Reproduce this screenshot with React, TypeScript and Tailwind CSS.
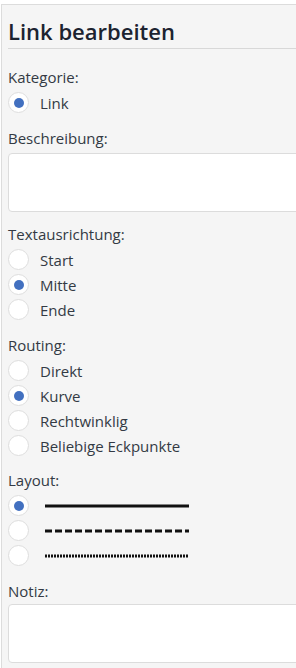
const font = { fontFamily: '"Open Sans", "Noto Sans", sans-serif' };

function Radio({ checked, label }: { checked?: boolean; label?: React.ReactNode }) {
  return (
    <div className="flex items-center h-[25px]">
      <span className="flex items-center justify-center w-[21px] h-[21px] rounded-full bg-white border border-[#dedede] shrink-0">
        {checked && <span className="w-[10px] h-[10px] rounded-full bg-[#4270c0]" />}
      </span>
      <span className="ml-[11px] text-[15px] leading-5 text-[#333a44]">{label}</span>
    </div>
  );
}

function Label({ children }: { children: React.ReactNode }) {
  return <div className="text-[15px] leading-5 text-[#333a44] mb-[3px]">{children}</div>;
}

function LineSample({ dash }: { dash?: string }) {
  return (
    <svg width="150" height="6" className="block ml-[5px]">
      <line x1="0" y1="3" x2="144" y2="3" stroke="#111" strokeWidth="3" strokeDasharray={dash} />
    </svg>
  );
}

export default function App() {
  return (
    <div className="w-[296px] h-[668px] bg-white pt-1 pl-[1px] overflow-hidden" style={font}>
      <div className="h-[700px] border-l border-t border-[#dcdcdc] bg-[#f5f5f5] pl-[6px]">
        <h2 className="pt-[10px] pb-[1px] text-[22px] leading-8 font-semibold text-[#1c2330] border-b border-[#d8d8d8]">
          Link bearbeiten
        </h2>

        <div className="mt-[18px]">
          <Label>Kategorie:</Label>
          <Radio checked label="Link" />
        </div>

        <div className="mt-[13px]">
          <Label>Beschreibung:</Label>
          <div className="mt-[5px] h-[59px] bg-white border border-[#dcdcdc] rounded-[4px] mr-[-4px]" />
        </div>

        <div className="mt-[12px]">
          <Label>Textausrichtung:</Label>
          <Radio label="Start" />
          <Radio checked label="Mitte" />
          <Radio label="Ende" />
        </div>

        <div className="mt-[13px]">
          <Label>Routing:</Label>
          <Radio label="Direkt" />
          <Radio checked label="Kurve" />
          <Radio label="Rechtwinklig" />
          <Radio label="Beliebige Eckpunkte" />
        </div>

        <div className="mt-[12px]">
          <Label>Layout:</Label>
          <Radio checked label={<LineSample />} />
          <Radio label={<LineSample dash="7 3" />} />
          <Radio label={<LineSample dash="2 1" />} />
        </div>

        <div className="mt-[13px]">
          <Label>Notiz:</Label>
          <div className="mt-[2px] h-[59px] bg-white border border-[#dcdcdc] rounded-[4px] mr-[-4px]" />
        </div>
      </div>
    </div>
  );
}
